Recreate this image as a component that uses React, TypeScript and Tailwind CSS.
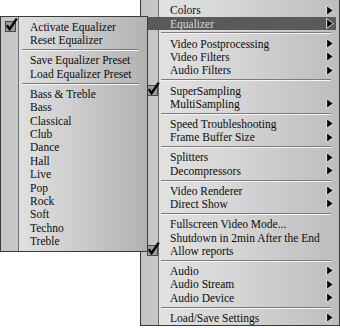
type Item = { label: string; arrow?: boolean; checked?: boolean; active?: boolean } | "sep";

const mainItems: Item[] = [
  { label: "Colors", arrow: true },
  { label: "Equalizer", arrow: true, active: true },
  "sep",
  { label: "Video Postprocessing", arrow: true },
  { label: "Video Filters", arrow: true },
  { label: "Audio Filters", arrow: true },
  "sep",
  { label: "SuperSampling", checked: true },
  { label: "MultiSampling", arrow: true },
  "sep",
  { label: "Speed Troubleshooting", arrow: true },
  { label: "Frame Buffer Size", arrow: true },
  "sep",
  { label: "Splitters", arrow: true },
  { label: "Decompressors", arrow: true },
  "sep",
  { label: "Video Renderer", arrow: true },
  { label: "Direct Show", arrow: true },
  "sep",
  { label: "Fullscreen Video Mode..." },
  { label: "Shutdown in 2min After the End" },
  { label: "Allow reports", checked: true },
  "sep",
  { label: "Audio", arrow: true },
  { label: "Audio Stream", arrow: true },
  { label: "Audio Device", arrow: true },
  "sep",
  { label: "Load/Save Settings", arrow: true },
];

const eqItems: Item[] = [
  { label: "Activate Equalizer", checked: true },
  { label: "Reset Equalizer" },
  "sep",
  { label: "Save Equalizer Preset" },
  { label: "Load Equalizer Preset" },
  "sep",
  ...["Bass & Treble", "Bass", "Classical", "Club", "Dance", "Hall", "Live", "Pop", "Rock", "Soft", "Techno", "Treble"].map(
    (label) => ({ label })
  ),
];

function Check() {
  return (
    <svg width="13" height="14" viewBox="0 0 13 14" className="-mt-[3px]">
      <rect x="0.5" y="3.5" width="10" height="10" fill="#9c9c9c" stroke="#4a4a4a" />
      <path d="M1.8 7.2 L4.6 11.2 L11.8 0.6" fill="none" stroke="#000" strokeWidth="2.4" />
    </svg>
  );
}

function Arrow() {
  return (
    <svg width="8" height="11" viewBox="0 0 8 11">
      <path d="M0.6 0.6 L7.4 5.5 L0.6 10.4 Z" fill="#111" stroke="#ececec" strokeWidth="0.9" />
      <path d="M2 3 L5.2 5.5 L2 8 Z" fill="#000" />
    </svg>
  );
}

function MainMenu() {
  return (
    <div className="ml-[140px] h-[326px] w-[200px] border-x border-b border-[#3a3a3a] bg-[linear-gradient(to_right,#c2c2c2_0px,#c8c8c8_17px,#6c6c6c_17px,#6c6c6c_18px,#e2e2e2_18px,#d6d6d6_45%,#bdbdbd_100%)] pt-[3.3px]">
      {mainItems.map((it, i) =>
        it === "sep" ? (
          <div key={i} className="flex h-[6.67px] items-center pl-[20px] pr-[8px]">
            <div className="h-0 w-full border-t border-b border-t-[#7c7c7c] border-b-[#f4f4f4]" />
          </div>
        ) : (
          <div
            key={i}
            className={
              it.active
                ? "mr-[3px] ml-[7px] flex h-[13.4px] items-center bg-[#5a5a5a] text-[#d6d6d6]"
                : "flex h-[13.4px] items-center text-[#0c0c0c]"
            }
          >
            <div className={it.active ? "w-[12px] shrink-0" : "flex w-[19px] shrink-0 pl-[6px]"}>
              {it.checked && <Check />}
            </div>
            <div className={it.active ? "flex flex-1 items-center justify-between pl-[10px] pr-[2px]" : "flex flex-1 items-center justify-between pl-[10px] pr-[5px]"}>
              <span className="whitespace-nowrap pt-[2px] leading-none">{it.label}</span>
              {it.arrow && <Arrow />}
            </div>
          </div>
        )
      )}
    </div>
  );
}

function EqMenu() {
  return (
    <div className="absolute left-0 top-[16px] w-[148px] border border-[#3a3a3a] bg-[linear-gradient(to_right,#c4c4c4_0px,#cacaca_17px,#6c6c6c_17px,#6c6c6c_18px,#e0e0e0_18px,#d0d0d0_45%,#b2b2b2_100%)] pb-[3px] pt-[3px]">
      {eqItems.map((it, i) =>
        it === "sep" ? (
          <div key={i} className="flex h-[6.67px] items-center pl-[21px] pr-[8px]">
            <div className="h-0 w-full border-t border-b border-t-[#7c7c7c] border-b-[#f4f4f4]" />
          </div>
        ) : (
          <div key={i} className="flex h-[13.4px] items-center text-[#0c0c0c]">
            <div className="flex w-[18px] shrink-0 pl-[4px]">{it.checked && <Check />}</div>
            <span className="whitespace-nowrap pl-[11px] pt-[2px] leading-none">{it.label}</span>
          </div>
        )
      )}
    </div>
  );
}

export default function App() {
  return (
    <div className="relative h-[328px] w-[340px] overflow-hidden bg-white font-['Liberation_Serif',serif] text-[11.5px]">
      <MainMenu />
      <EqMenu />
    </div>
  );
}
